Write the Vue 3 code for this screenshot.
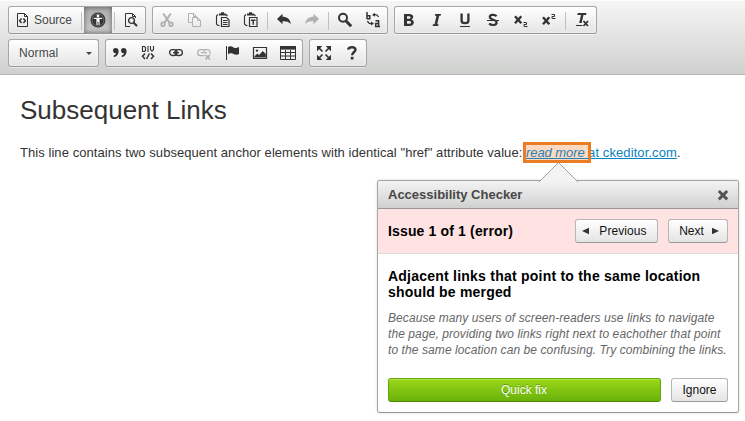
<script setup>
const P = (d, w = 1.2) => `<path d="${d}" fill="none" stroke="currentColor" stroke-width="${w}"/>`
const F = (d) => `<path d="${d}" fill="currentColor"/>`
const icons = {
  source: P('M9.5 1.5H2.5V14.5H12.5V4.5ZM9.5 1.5V4.5H12.5', 1) + P('M6.6 6.5L4.6 8.8L6.6 11.1M8.4 6.5L10.4 8.8L8.4 11.1', 1.5),
  a11y: '<circle cx="8" cy="8" r="7.5" fill="#333"/><circle cx="8" cy="8" r="6" fill="none" stroke="#999" stroke-width=".6"/><circle cx="8" cy="4" r="1.4" fill="#fff"/><path d="M3.8 5.7H12.2V7.1H9.6V13H8.5V9.8H7.5V13H6.4V7.1H3.8Z" fill="#fff"/>',
  preview: P('M12.5 6V4.5L9.5 1.5H2.5V14.5H7M9.5 1.5V4.5H12.5', 1) + '<circle cx="8.5" cy="8.5" r="2.9" fill="none" stroke="currentColor" stroke-width="1.4"/>' + P('M10.7 10.7L14 14', 2.1),
  cut: P('M4.2 1.5L10.7 11M11.8 1.5L5.3 11', 2) + '<g fill="none" stroke="currentColor" stroke-width="1.8"><circle cx="4" cy="12.2" r="1.8"/><circle cx="12" cy="12.2" r="1.8"/></g>',
  copy: P('M5 10.5H1.5V1.5H6.5L9.5 4.5M6.5 1.5V4.5H9.5M5.5 5.5H10.5L13.5 8.5V14.5H5.5ZM10.5 5.5V8.5H13.5', 1),
  paste: P('M4.5 13.5H3L1.5 12V4L3 2.5M11 2.5L12.5 4', 1.1) + F('M4 1.6H6V.3H9V1.6H11V3.4H4Z') + P('M6.5 5.5H11.5L14 8V14.5H6.5Z', 1.2) + P('M8 8.5H12.5M8 10.5H12.5M8 12.5H12.5', 1),
  pasteText: P('M4.5 13.5H3L1.5 12V4L3 2.5M11 2.5L12.5 4', 1.1) + F('M4 1.6H6V.3H9V1.6H11V3.4H4Z') + P('M6.5 5.5H14V14.5H6.5Z', 1.2) + P('M8 8.3H12.5M10.25 8.3V12.8', 1.4),
  undo: F('M1 7L6.5 1.8V4.8C11 4.8 14.2 7 14.8 12C12.5 9.5 9.5 9 6.5 9.3V12.2Z'),
  redo: F('M15 7L9.5 1.8V4.8C5 4.8 1.8 7 1.2 12C3.5 9.5 6.5 9 9.5 9.3V12.2Z'),
  find: '<circle cx="6" cy="5.8" r="4" fill="none" stroke="currentColor" stroke-width="2"/>' + P('M9 9L14.2 14.2', 3),
  replace: P('M2 0V7M2 3.7H4.8V6.7H2M10.5 8.7H13.6V14.4H10.7V11.4H13.6M13.6 14.4H15', 1.5) + P('M9 3Q12 1.8 13.5 5M2.5 9Q3.5 12.2 7 11.5', 1.2) + F('M7 3L10 .8V4.8ZM9 11.5L6 9.5V13.5Z'),
  bold: F('M3 2H8.3C13 2 13.3 6.2 10.3 7.5C14.5 8.7 13.2 14 8.5 14H3ZM6 4.2V6.7H7.8C10.3 6.7 10.3 4.2 7.8 4.2ZM6 8.9V11.8H8C10.8 11.8 10.8 8.9 8 8.9Z'),
  italic: F('M6.2 2H12L11.6 3.8H10.2L8.2 12.2H9.6L9.2 14H3.6L4 12.2H5.6L7.5 3.8H5.8Z'),
  underline: P('M4.6 1.5V8.5Q4.6 11.2 8 11.2Q11.4 11.2 11.4 8.5V1.5', 2.3) + P('M3 14.5H13', 1),
  strike: P('M11.6 4.2C10 2.4 4.6 2.3 4.8 5.2C5 8.4 11.6 7 11.6 10.4C11.6 13.7 6 13.6 4.2 11.5', 2.2) + P('M2 8.5H14', 1),
  sub: P('M2 4.2L8.3 11.2M8.3 4.2L2 11.2', 2.4) + P('M10.5 10.5H13.5V12.5H11V14.5H14.5', 1),
  sup: P('M2 5.2L8.3 12.2M8.3 5.2L2 12.2', 2.4) + P('M10.5 2.5H13.5V4.5H11V6.5H14.5', 1),
  clear: F('M3.8 1H12.5L12 3H9.5L7.7 11H5.2L7 3H3.3Z') + P('M2 13.5H8.5', 1) + P('M9.5 9L14 14M14 9L9.5 14', 1.8),
  quote: F('M1 5.5C1 2.2 6.8 2.2 6.6 6.2C6.5 9.5 4.5 11.8 1.8 12V10.6C3.1 10 3.9 9.2 4 8.1C2.3 8.5 1 7.4 1 5.5ZM9 5.5C9 2.2 14.8 2.2 14.6 6.2C14.5 9.5 12.5 11.8 9.8 12V10.6C11.1 10 11.9 9.2 12 8.1C10.3 8.5 9 7.4 9 5.5Z'),
  div: P('M2.5 1.5H4.5L5.5 2.5V5.5L4.5 6.5H2.5ZM8 1V7M10.5 1V4.5L12 6.2L13.5 4.5V1', 1.1) + P('M5 8.5L2.5 11.3L5 14M11 8.5L13.5 11.3L11 14M9.4 8.5L6.6 14', 1.5),
  link: '<g fill="none" stroke="currentColor" stroke-width="1.3"><rect x="1.6" y="4.7" width="7.4" height="5.8" rx="2.9"/><rect x="7" y="4.7" width="7.4" height="5.8" rx="2.9"/></g>' + P('M5 7.6H11', 1.3),
  unlink: '<g fill="none" stroke="currentColor" stroke-width="1.3"><path d="M8.5 10.7H4.7A3 3 0 0 1 4.7 4.7H6.5A3 3 0 0 1 9 6.3M7 6.3A3 3 0 0 1 9.5 4.7H11.5A3 3 0 0 1 14 8.8M4.8 7.7H11"/></g>' + P('M9.5 9.8L14 14.5M14 9.8L9.5 14.5', 1.8),
  flag: P('M2.5 1V15', 1) + F('M4 2C6 .7 8 1.3 9.5 2.4C11.4 3.5 13 2.8 15 2V9C13 10.2 11 9.8 9 8.8C7.3 8 5.5 8.2 4 9.3Z'),
  image: P('M1.5 2.5H14.5V13.5H1.5Z', 1.2) + '<circle cx="5" cy="5.6" r="1.2" fill="currentColor"/>' + F('M2.2 11.8L5.2 8.5L7 10L10.8 6L13.8 9V12.6H2.2Z'),
  table: F('M0 1H16V4.6H0Z') + P('M.5 2.5V14.5H15.5V2.5M0 7.5H16M0 11H16M5.5 5V14.5M10.5 5V14.5', 1),
  maximize: F('M1 1H6.3L1 6.3ZM15 1V6.3L9.7 1ZM1 15V9.7L6.3 15ZM15 15H9.7L15 9.7Z') + P('M2.5 2.5L6.5 6.5M13.5 2.5L9.5 6.5M2.5 13.5L6.5 9.5M13.5 13.5L9.5 9.5', 1.7),
  help: P('M4.2 4.6C4.5 1.5 11.5 1.2 11.5 4.8C11.5 7 8.2 7.2 8.2 10.2', 2.4) + F('M6.8 11.8H9.5V14.5H6.8Z')
}
const rows = [
  [
    [{ i: 'source', label: 'Source' }, null, { i: 'a11y', on: true }, null, { i: 'preview' }],
    [{ i: 'cut', off: true }, { i: 'copy', off: true }, { i: 'paste' }, { i: 'pasteText' }, null, { i: 'undo' }, { i: 'redo', off: true }, null, { i: 'find' }, { i: 'replace' }],
    [{ i: 'bold' }, { i: 'italic' }, { i: 'underline' }, { i: 'strike' }, { i: 'sub' }, { i: 'sup' }, null, { i: 'clear' }]
  ],
  [
    [{ combo: 'Normal' }],
    [{ i: 'quote' }, { i: 'div' }, { i: 'link' }, { i: 'unlink', off: true }, { i: 'flag' }, { i: 'image' }, { i: 'table' }],
    [{ i: 'maximize' }, { i: 'help' }]
  ]
]
</script>

<template>
  <div class="editor">
    <header class="toolbar">
      <div v-for="(row, r) in rows" :key="r" class="row">
        <div v-for="(group, g) in row" :key="g" class="group">
          <template v-for="(b, k) in group" :key="k">
            <span v-if="!b" class="sep"></span>
            <div v-else-if="b.combo" class="combo"><span>{{ b.combo }}</span><i class="caret"></i></div>
            <div v-else class="btn" :class="{ on: b.on, off: b.off, wide: b.label }">
              <svg width="16" height="16" viewBox="0 0 16 16" v-html="icons[b.i]"></svg>
              <span v-if="b.label">{{ b.label }}</span>
            </div>
          </template>
        </div>
      </div>
    </header>
    <main class="content">
      <h1>Subsequent Links</h1>
      <p><span class="lead">This line contains two subsequent anchor elements with identical "href" attribute value: </span><a class="marked"><em>read more </em></a><a class="second">at ckeditor.com</a>.</p>
    </main>
    <section class="popup">
      <svg class="arrow" width="41" height="20" viewBox="0 0 41 20"><path d="M1 20L20.5 .5L40 20" fill="#f3f3f3" stroke="#a3a3a3" /></svg>
      <div class="title">
        <span>Accessibility Checker</span>
        <svg width="12" height="12" viewBox="0 0 12 12"><path d="M1.8 2L10.2 10.4M10.2 2L1.8 10.4" stroke="#555" stroke-width="2.9" /></svg>
      </div>
      <div class="issue">
        <strong>Issue 1 of 1 (error)</strong>
        <div class="button prev"><svg width="7" height="8" viewBox="0 0 7 8"><path d="M7 .8V7.2L0 4Z" fill="#333" /></svg><span>Previous</span></div>
        <div class="button next"><span>Next</span><svg width="7" height="8" viewBox="0 0 7 8"><path d="M0 .8V7.2L7 4Z" fill="#333" /></svg></div>
      </div>
      <div class="body">
        <h2><span class="h-a">Adjacent links that point to the same location</span><br><span class="h-b">should be merged</span></h2>
        <p>Because many users of screen-readers use links to navigate<br>the page, providing two links right next to eachother that point<br>to the same location can be confusing. Try combining the links.</p>
        <div class="actions">
          <div class="button fix">Quick fix</div>
          <div class="button ignore">Ignore</div>
        </div>
      </div>
    </section>
  </div>
</template>

<style>
body { margin: 0; background: #fff; overflow: hidden; }
</style>

<style scoped>
*, *::after { box-sizing: border-box; }
.editor { position: relative; width: 745px; height: 421px; overflow: hidden; font-family: "Liberation Sans", Arial, sans-serif; color: #333; }
svg { display: block; flex: none; }
.toolbar { display: flex; flex-direction: column; gap: 5px; margin-top: 1px; height: 74px; padding: 5px 8px 0; background: linear-gradient(#f5f5f5, #cfd1cf); border-bottom: 1px solid #b6b6b6; }
.row { display: flex; gap: 6px; }
.group { display: flex; height: 28px; border: 1px solid #a6a6a6; border-bottom-color: #979797; border-radius: 3px; background: linear-gradient(#fff, #e4e4e4); box-shadow: 0 1px 0 rgba(255, 255, 255, .5), inset 0 0 2px 1px rgba(255, 255, 255, .4); }
.btn { display: flex; width: 28px; height: 26px; padding: 5px 6px; color: #333; }
.wide { width: 70px; gap: 3px; font-size: 12px; line-height: 16px; color: #474747; }
.wide svg { color: #333; }
.on { background: linear-gradient(#aaa, #cacaca); box-shadow: inset 0 0 5px rgba(0, 0, 0, .5); }
.off { color: #b1b1b1; }
.sep { width: 1px; height: 18px; margin: 5px 2px 0; background: #c0c0c0; }
.combo { display: flex; width: 89px; justify-content: space-between; align-items: center; padding: 0 6px 0 10px; font-size: 12px; color: #474747; letter-spacing: .12px; }
.caret { border: 3px solid transparent; border-top-color: #474747; border-bottom: 0; }
.content { padding: 20px 20px 0; }
h1 { margin: 0; font-size: 26px; font-weight: 400; line-height: 31px; }
.content p { margin: 16px 0 0; font-size: 13px; line-height: 21px; white-space: pre; }
.lead { letter-spacing: .061px; }
a { color: #0782c1; text-decoration: underline; }
.second { letter-spacing: .09px; }
.marked { position: relative; text-decoration: none; }
.marked em { position: relative; z-index: 1; color: #2a80b5; text-decoration: underline; letter-spacing: -.08px; }
.marked::after { content: ""; position: absolute; left: -3px; top: -3px; width: 68px; height: 21px; border: 3px solid #ea7c24; background: #f9d9c2; }
.popup { position: absolute; left: 377px; top: 180px; width: 362px; height: 233px; border: 1px solid #a6a6a6; border-bottom-color: #979797; border-radius: 3px; background: #fff; box-shadow: 0 0 3px rgba(0, 0, 0, .15); }
.arrow { position: absolute; left: 160px; top: -19px; }
.title { display: flex; align-items: center; justify-content: space-between; height: 28px; padding: 0 9px 0 10px; border-bottom: 1px solid #999; border-radius: 2px 2px 0 0; background: linear-gradient(#f3f3f3, #cfd1cf); font-size: 13px; font-weight: 700; color: #474747; }
.issue { display: flex; align-items: center; height: 45px; padding: 0 10px; background: #ffe3e3; border-bottom: 1px solid #ddd; color: #000; font-size: 14px; }
.issue strong { flex: 1; letter-spacing: .15px; }
.button { display: flex; align-items: center; justify-content: center; height: 24px; border: 1px solid #b6b6b6; border-bottom-color: #999; border-radius: 3px; background: linear-gradient(#fff, #e4e4e4); font-size: 12px; color: #111; }
.prev { width: 83px; gap: 10px; margin-right: 10px; padding-right: 4px; letter-spacing: .08px; }
.next { width: 60px; gap: 8px; padding-left: 2px; }
.body { padding: 14px 10px 0; }
h2 { margin: 0; font-size: 14px; line-height: 16px; color: #000; }
.h-a { letter-spacing: .23px; }
.h-b { letter-spacing: .19px; }
.body p { margin: 10px 0 0; font-size: 12px; line-height: 16px; font-style: italic; letter-spacing: .087px; color: #666; white-space: nowrap; }
.actions { display: flex; gap: 10px; margin-top: 20px; }
.fix { flex: 1; padding-right: 1px; border-color: #62a60a; border-bottom-color: #4f8b06; background: linear-gradient(#9ad717, #69b10b); box-shadow: inset 0 1px 0 #b2e44a; color: #fff; text-shadow: 0 -1px 0 rgba(55, 104, 3, .5); }
.ignore { width: 57px; }
</style>
